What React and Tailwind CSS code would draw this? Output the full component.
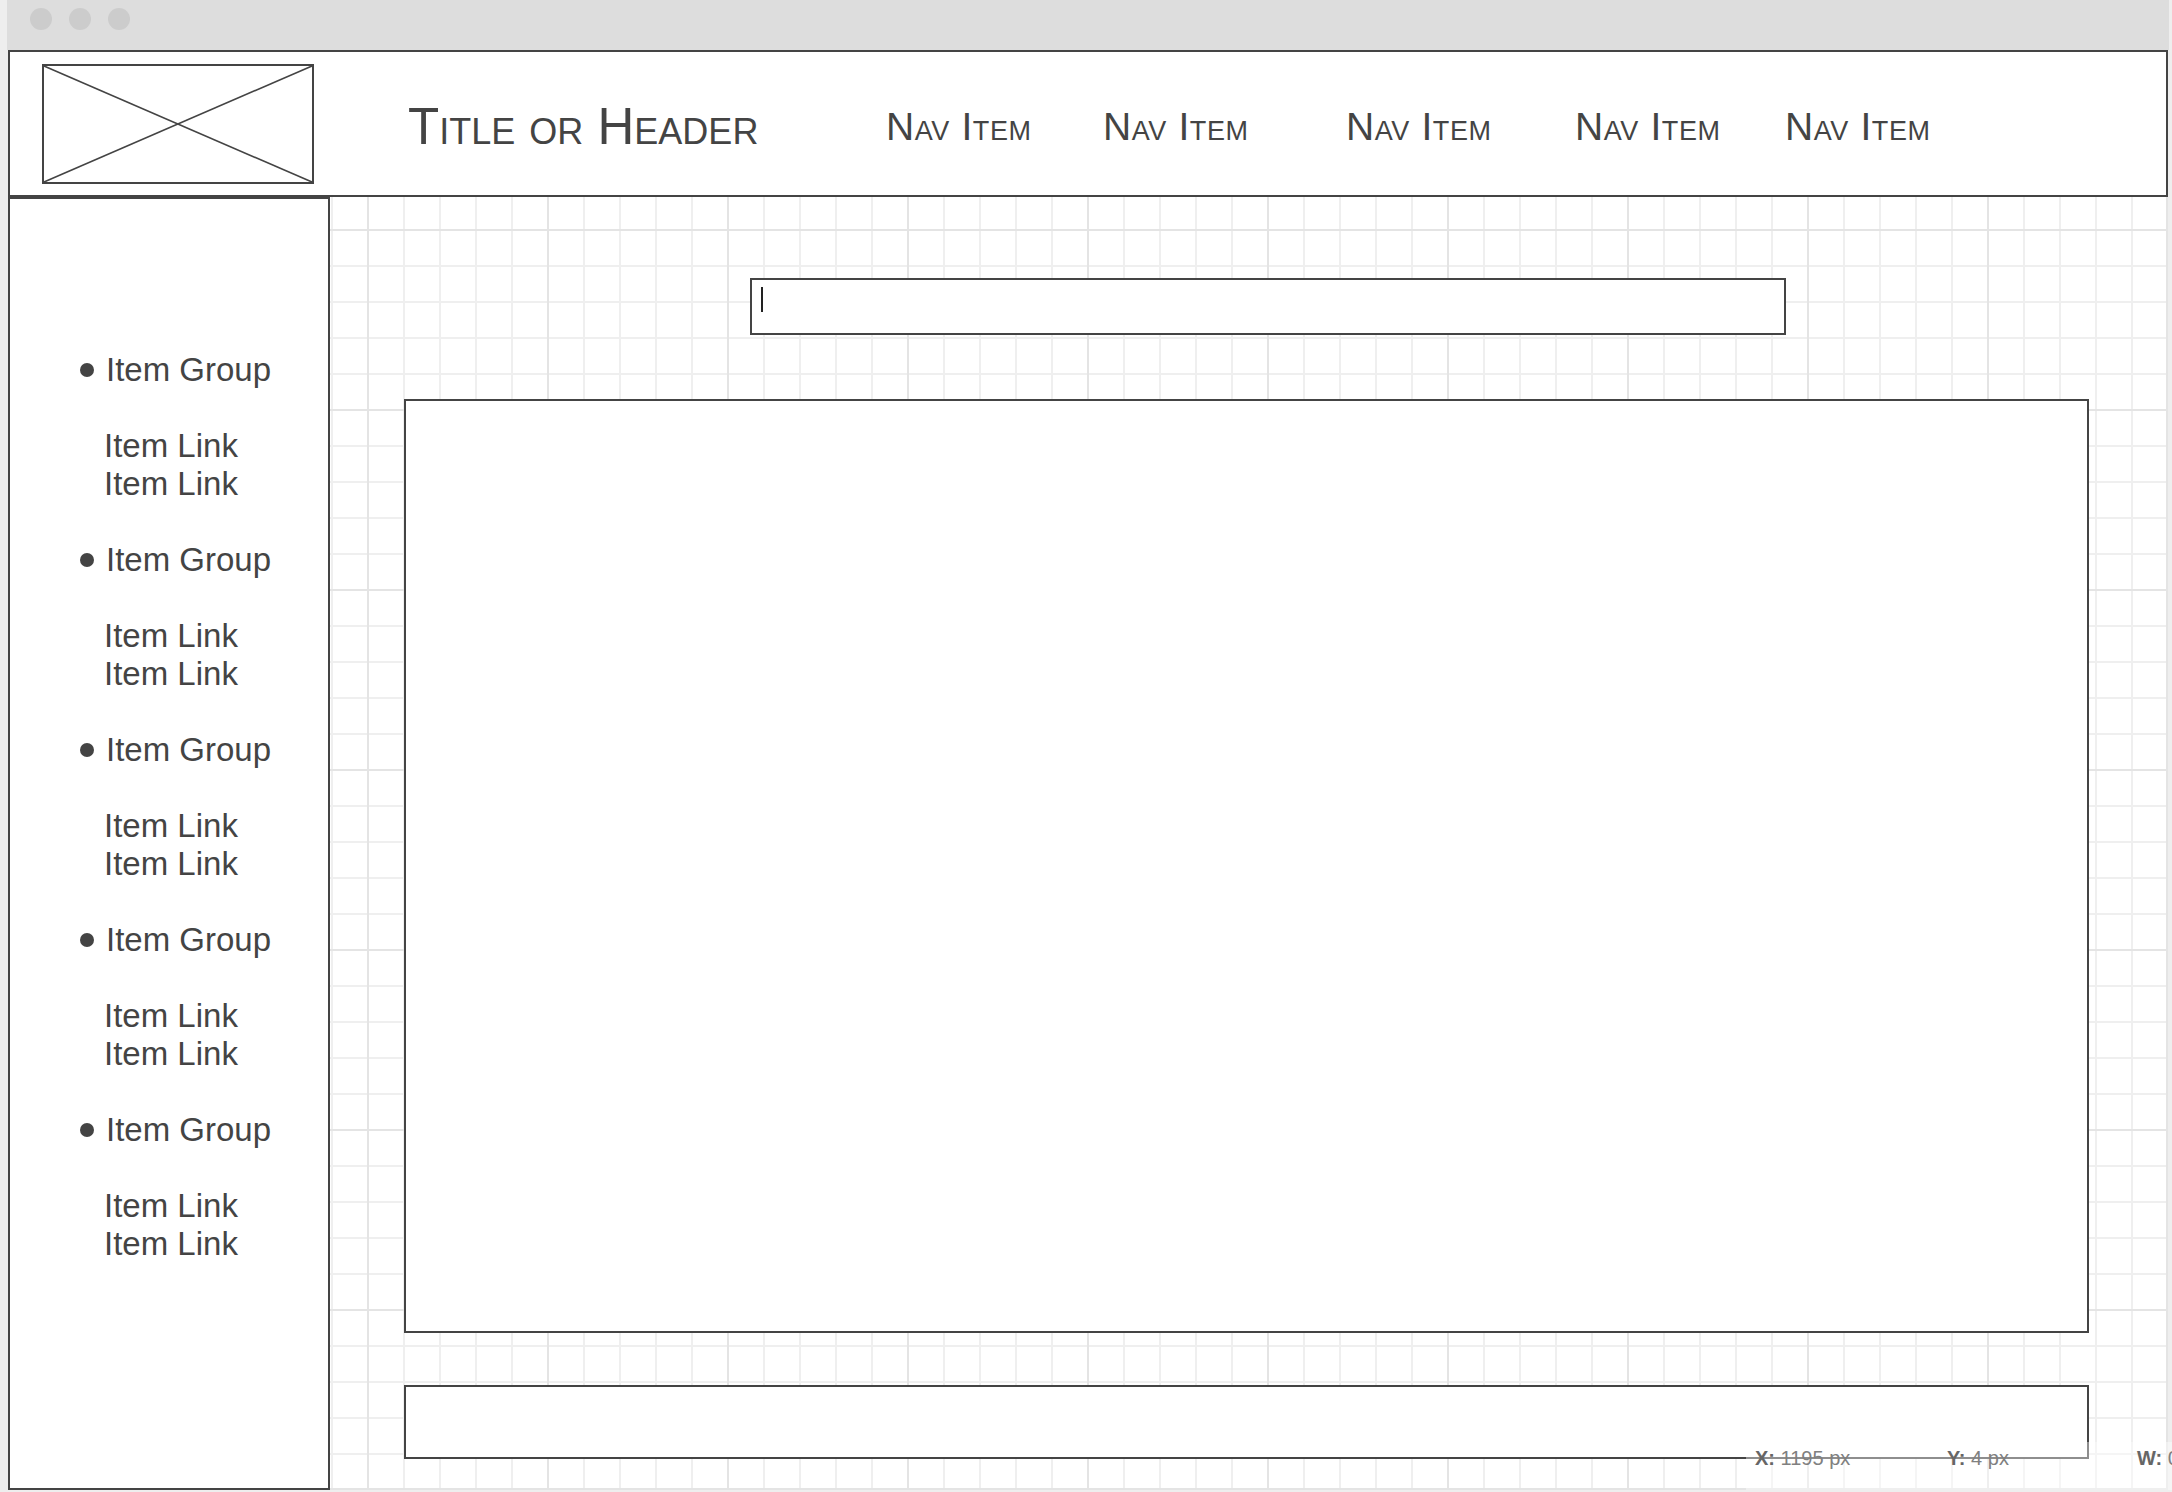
import React from 'react';

const navItems = [
  { label: 'Nav Item', w: 'w-[217px]' },
  { label: 'Nav Item', w: 'w-[243px]' },
  { label: 'Nav Item', w: 'w-[229px]' },
  { label: 'Nav Item', w: 'w-[210px]' },
  { label: 'Nav Item', w: 'w-[200px]' },
];

const groups = [1, 2, 3, 4, 5];

const LogoPlaceholder = () => (
  <svg width="272" height="120" viewBox="0 0 272 120" className="block">
    <rect x="1" y="1" width="270" height="118" fill="white" stroke="#444" strokeWidth="2" />
    <line x1="2" y1="2" x2="270" y2="118" stroke="#444" strokeWidth="1.6" />
    <line x1="270" y1="2" x2="2" y2="118" stroke="#444" strokeWidth="1.6" />
  </svg>
);

const Sidebar = () => (
  <div className="w-[322px] h-[1293px] shrink-0 border-2 border-[#444] bg-white pt-[152px] font-['Liberation_Sans',Arial,sans-serif] text-[33px] leading-[38px] text-[#444]">
    {groups.map((g) => (
      <div key={g} className="flex flex-col">
        <div className="flex items-center pl-[70px]">
          <span className="w-[14px] h-[14px] rounded-full bg-[#444] mr-[12px]" />
          <span>Item Group</span>
        </div>
        <div className="h-[38px]" />
        <div className="pl-[94px]">Item Link</div>
        <div className="pl-[94px]">Item Link</div>
        <div className="h-[38px]" />
      </div>
    ))}
  </div>
);

const Canvas = () => (
  <div className="flex-1 h-[1293px] flex flex-col border-r-2 border-b-2 border-[#e4e4e4] bg-white [background-image:linear-gradient(to_right,#e4e4e4_2px,transparent_2px),linear-gradient(to_bottom,#e4e4e4_2px,transparent_2px),linear-gradient(to_right,#efefef_2px,transparent_2px),linear-gradient(to_bottom,#efefef_2px,transparent_2px)] [background-size:180px_180px,180px_180px,36px_36px,36px_36px] [background-position:37px_32px,37px_32px,1px_32px,1px_32px]">
    <div className="mt-[81px] ml-[420px] w-[1036px] h-[57px] border-2 border-[#444] bg-white">
      <div className="ml-[9px] mt-[7px] w-[2px] h-[25px] bg-[#222]" />
    </div>
    <div className="mt-[64px] ml-[74px] w-[1685px] h-[934px] border-2 border-[#444] bg-white" />
    <div className="mt-[52px] ml-[74px] w-[1685px] h-[74px] border-2 border-[#444] bg-white" />
  </div>
);

const App = () => {
  return (
    <div className="relative w-[2172px] h-[1492px] overflow-hidden bg-[#eeeeee] pl-[7px]">
      <div className="w-[2162px] flex flex-col">
        <div className="h-[50px] bg-[#dddddd] flex items-start pl-[23px] pt-[8px] gap-[17px]">
          <span className="w-[22px] h-[22px] rounded-full bg-[#cccccc]" />
          <span className="w-[22px] h-[22px] rounded-full bg-[#cccccc]" />
          <span className="w-[22px] h-[22px] rounded-full bg-[#cccccc]" />
        </div>

        <header className="ml-[1px] w-[2160px] h-[147px] border-2 border-[#444] bg-white flex items-start font-['Liberation_Sans',Arial,sans-serif] text-[#444] [font-variant-caps:small-caps]">
          <div className="ml-[32px] mt-[12px]">
            <LogoPlaceholder />
          </div>
          <div className="ml-[94px] w-[478px] mt-[49px] text-[51px] leading-none">Title or Header</div>
          <nav className="flex mt-[55px] text-[39px] leading-none tracking-[0.6px]">
            {navItems.map((n, i) => (
              <div key={i} className={n.w}>{n.label}</div>
            ))}
          </nav>
        </header>

        <div className="ml-[1px] flex w-[2160px]">
          <Sidebar />
          <Canvas />
        </div>
      </div>

      <div className="absolute left-[1746px] top-[1442px] w-[426px] h-[48px] bg-white/40 pl-[9px] pt-[6px] flex font-['Liberation_Sans',Arial,sans-serif] text-[20px] leading-none whitespace-nowrap">
        <div className="w-[192px] shrink-0"><span className="font-bold text-[#666]">X:</span> <span className="text-[#808080]">1195 px</span></div>
        <div className="w-[190px] shrink-0"><span className="font-bold text-[#666]">Y:</span> <span className="text-[#808080]">4 px</span></div>
        <div className="w-[120px] shrink-0"><span className="font-bold text-[#666]">W:</span> <span className="text-[#808080]">0 px</span></div>
      </div>
    </div>
  );
};

export default App;
